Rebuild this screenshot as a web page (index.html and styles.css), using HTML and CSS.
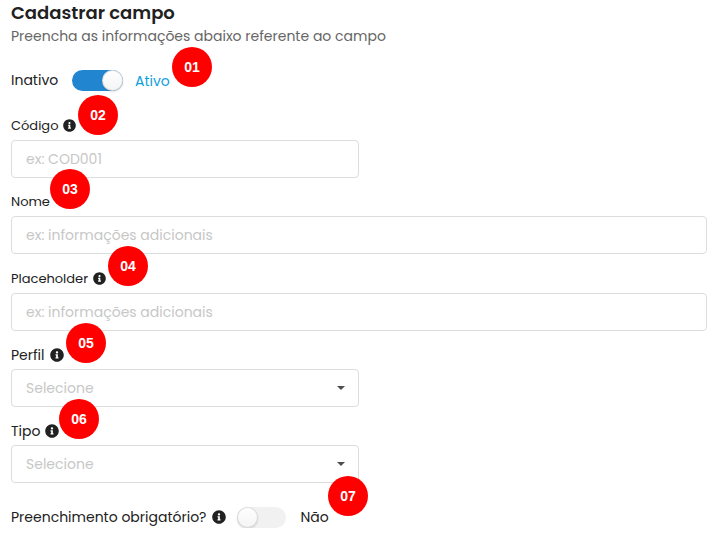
FILE: index.html
```
<!DOCTYPE html>
<html lang="pt-BR">
<head>
<meta charset="utf-8">
<meta name="viewport" content="width=device-width, initial-scale=1.0">
<title>Cadastrar campo</title>
<link rel="stylesheet" href="styles.css">
</head>
<body>
<svg class="sprite" aria-hidden="true">
  <symbol id="info" viewBox="0 0 512 512">
    <path d="M256 8C119 8 8 119 8 256s111 248 248 248 248-111 248-248S393 8 256 8zm0 110c23.200 0 42 18.800 42 42s-18.800 42-42 42-42-18.800-42-42 18.800-42 42-42zm56 254c0 6.600-5.400 12-12 12h-88c-6.600 0-12-5.400-12-12v-24c0-6.600 5.400-12 12-12h12v-64h-12c-6.600 0-12-5.400-12-12v-24c0-6.600 5.400-12 12-12h64c6.600 0 12 5.400 12 12v100h12c6.600 0 12 5.400 12 12v24z"/>
  </symbol>
</svg>
<form class="form">
  <h1>Cadastrar campo</h1>
  <p class="subtitle">Preencha as informações abaixo referente ao campo</p>

  <div class="switch-row status">
    <span class="inactive">Inativo</span>
    <span class="switch on"></span>
    <span class="active">Ativo</span>
    <span class="badge b1">01</span>
  </div>

  <div class="field half">
    <label class="small" for="codigo">Código<svg class="info"><use href="#info"/></svg></label>
    <input id="codigo" type="text" placeholder="ex: COD001">
    <span class="badge b2">02</span>
  </div>

  <div class="field">
    <label class="small" for="nome">Nome</label>
    <input id="nome" type="text" placeholder="ex: informações adicionais">
    <span class="badge b3">03</span>
  </div>

  <div class="field spaced">
    <label class="small" for="placeholder">Placeholder<svg class="info"><use href="#info"/></svg></label>
    <input id="placeholder" type="text" placeholder="ex: informações adicionais">
    <span class="badge b4">04</span>
  </div>

  <div class="field half">
    <label>Perfil<svg class="info"><use href="#info"/></svg></label>
    <div class="select"><span>Selecione</span></div>
    <span class="badge b5">05</span>
  </div>

  <div class="field half">
    <label>Tipo<svg class="info"><use href="#info"/></svg></label>
    <div class="select"><span>Selecione</span></div>
    <span class="badge b6">06</span>
  </div>

  <div class="switch-row required">
    <span>Preenchimento obrigatório?</span>
    <svg class="info"><use href="#info"/></svg>
    <span class="switch"></span>
    <span class="no">Não</span>
    <span class="badge b7">07</span>
  </div>
</form>
</body>
</html>
```
FILE: styles.css
```
* { box-sizing: border-box; }
body { margin: 0; background: #fff; color: #212121; font-family: Poppins, Inter, sans-serif; font-size: 14px; }
.sprite { display: none; }
.form { width: 707px; padding-left: 11px; }
h1 { margin: 0; height: 26px; font-size: 18px; line-height: 26px; font-weight: 600; white-space: nowrap; }
.subtitle { margin: 0; height: 20px; line-height: 20px; color: #666; white-space: nowrap; }
.switch-row { position: relative; display: flex; align-items: center; height: 22px; white-space: nowrap; }
.status { margin-top: 24px; align-items: flex-start; line-height: 21px; }
.inactive { width: 61px; }
.active { margin-left: 12px; line-height: 23px; color: #109fdb; }
.switch { position: relative; width: 49px; height: 21px; border-radius: 11px; background: #f1f1f1; }
.switch::after { content: ""; position: absolute; top: 0; left: 0; width: 21px; height: 21px; border-radius: 50%; background: linear-gradient(#fff, #f4f4f4); box-shadow: 0 1px 2px rgba(34,36,38,.15), 0 0 0 1px rgba(34,36,38,.15) inset; }
.switch.on { width: 51px; background: #2185d0; }
.switch.on::after { left: 30px; }
.field { position: relative; margin-top: 11px; }
.half { width: 348px; }
.status + .field { margin-top: 21px; }
.spaced { margin-top: 12px; }
label { display: flex; align-items: center; height: 27px; white-space: nowrap; }
.small { padding-bottom: 1px; font-size: 13px; }
.info { width: 14px; height: 14px; margin: -2px 0 0 5px; fill: #212121; }
.small .info { width: 13px; height: 13px; }
input, .select { display: block; width: 100%; height: 38px; padding: 0 14px; border: 1px solid #dcdddd; border-radius: 4px; background: #fff; font: inherit; outline: none; }
input::placeholder { color: #c7c7c7; opacity: 1; }
.select { display: flex; align-items: center; justify-content: space-between; color: #c7c7c7; }
.select::after { content: ""; margin-right: -1px; border: 4px solid transparent; border-top-color: #4d4d4d; border-bottom: 0; }
.required { margin-top: 23px; }
.required .info { margin: 0 0 0 6px; }
.required .switch { margin-left: 11px; }
.no { margin-left: 14px; }
.badge { position: absolute; z-index: 1; width: 40px; height: 40px; border-radius: 50%; background: #f00; color: #fff; font: bold 14px/40px "Liberation Sans", sans-serif; text-align: center; }
.b1 { left: 161px; top: -23px; }
.b2 { left: 67px; top: -18px; }
.b3 { left: 39px; top: -20px; }
.b4 { left: 97px; top: -20px; }
.b5 { left: 55px; top: -19px; }
.b6 { left: 48px; top: -19px; }
.b7 { left: 317px; top: -30px; }
```
